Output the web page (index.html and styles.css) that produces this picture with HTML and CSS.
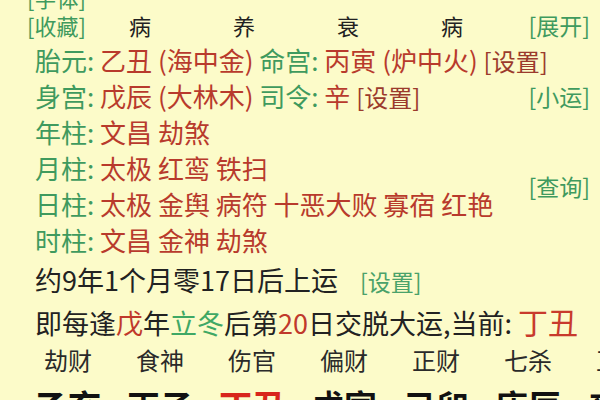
FILE: index.html
```html
<!DOCTYPE html>
<html lang="zh-CN">
<head>
<meta charset="utf-8">
<title>命盘</title>
<link rel="stylesheet" href="styles.css">
</head>
<body>
<div class="page">
  <div class="info">
    <div class="top g">[字体]</div>
    <div class="head">
      <span class="g fav">[收藏]</span>
      <span class="hl">病</span><span class="hl">养</span><span class="hl">衰</span><span class="hl">病</span>
    </div>
    <div class="btn b1 g">[展开]</div>
    <div class="line l1"><span class="g">胎元:</span> <span class="r">乙丑 (海中金)</span> <span class="g">命宫:</span> <span class="r">丙寅 (炉中火)</span> <span class="set">[设置]</span></div>
    <div class="line l2"><span class="g">身宫:</span> <span class="r">戊辰 (大林木)</span> <span class="g">司令:</span> <span class="r">辛</span> <span class="set">[设置]</span></div>
    <div class="btn b2 g">[小运]</div>
    <div class="line l3"><span class="g">年柱:</span> <span class="r">文昌 劫煞</span></div>
    <div class="line l4"><span class="g">月柱:</span> <span class="r">太极 红鸾 铁扫</span></div>
    <div class="line l5"><span class="g">日柱:</span> <span class="r">太极 金舆 病符 十恶大败 寡宿 红艳</span></div>
    <div class="btn b3 g">[查询]</div>
    <div class="line l6"><span class="g">时柱:</span> <span class="r">文昌 金神 劫煞</span></div>
  </div>
  <div class="luck">约9年1个月零17日后上运<span class="g small">[设置]</span></div>
  <div class="rule">即每逢<span class="r2">戊</span>年<span class="g2">立冬</span>后第<span class="r2">20</span>日交脱大运,当前: <span class="cur">丁丑</span></div>
  <div class="gods">
    <span>劫财</span><span>食神</span><span>伤官</span><span>偏财</span><span>正财</span><span>七杀</span><span>正印</span>
  </div>
  <div class="pillars">
    <span>乙亥</span><span>丙子</span><span class="now">丁丑</span><span>戊寅</span><span>己卯</span><span>庚辰</span><span>辛巳</span>
  </div>
</div>
</body>
</html>
```
FILE: styles.css
```css
html, body {
  margin: 0;
  padding: 0;
  background: #fcfbc9;
}
body {
  width: 600px;
  height: 400px;
  overflow: hidden;
  font-family: "Noto Sans CJK SC", "Noto Sans", sans-serif;
  color: #2a2a2a;
}
.page {
  padding: 0;
}
.g { color: #3f9a5e; }
.r { color: #b83a2c; }
.set { color: #9b3a2c; font-size: 24px; }

.info {
  display: grid;
  grid-template-columns: 1fr auto;
  grid-template-rows: 20px 35px repeat(6, 36px);
  margin-top: -13px;
  padding: 0 10px 0 27px;
  white-space: nowrap;
}
.top {
  grid-column: 1 / -1;
  grid-row: 1;
  font-size: 22px;
  line-height: 20px;
}
.head {
  grid-column: 1;
  grid-row: 2;
  display: grid;
  grid-template-columns: 61px repeat(4, 104px);
  align-items: center;
  font-size: 22px;
}
.hl {
  text-align: center;
  color: #222;
}
.btn {
  grid-column: 2;
  font-size: 23px;
  align-self: center;
}
.b1 { grid-row: 2; }
.b2 { grid-row: 4; }
.b3 { grid-row: 6 / span 2; }
.line {
  grid-column: 1 / -1;
  padding-left: 8px;
  font-size: 26px;
  line-height: 36px;
}
.l1 { grid-row: 3; }
.l2 { grid-row: 4; }
.l3 { grid-row: 5; }
.l4 { grid-row: 6; }
.l5 { grid-row: 7; }
.l6 { grid-row: 8; }

.luck {
  padding-left: 35px;
  font-size: 27px;
  line-height: 40px;
  margin-top: 2px;
  color: #222;
  white-space: nowrap;
}
.small { font-size: 23px; margin-left: 22px; color: #4aa26a; }
.rule {
  padding-left: 35px;
  font-size: 27px;
  line-height: 40px;
  color: #222;
  white-space: nowrap;
}
.r2 { color: #c0392b; }
.g2 { color: #3fa865; }
.cur { color: #c83a2c; font-size: 30px; }
.gods, .pillars {
  display: grid;
  grid-template-columns: repeat(7, 92px);
  padding-left: 22px;
  white-space: nowrap;
}
.gods span, .pillars span {
  text-align: center;
}
.gods {
  font-size: 24px;
  line-height: 34px;
  color: #2a2a2a;
}
.pillars {
  font-size: 33px;
  font-weight: bold;
  line-height: 56px;
  color: #111;
}
.pillars .now { color: #d8261c; }
```
